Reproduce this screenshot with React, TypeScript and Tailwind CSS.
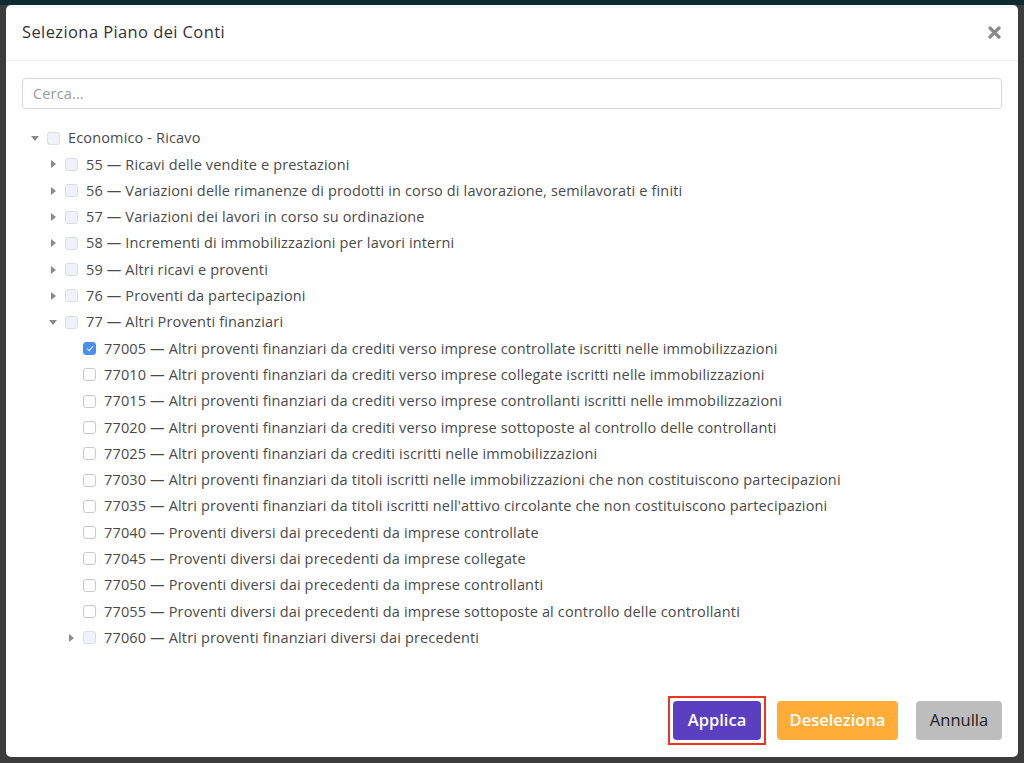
import React from "react";

type Node = {
  code?: string;
  label: string;
  level: number;
  caret?: "right" | "down";
  parent?: boolean;
  checked?: boolean;
};

const rows: Node[] = [
  { label: "Economico - Ricavo", level: 0, caret: "down", parent: true },
  { code: "55", label: "Ricavi delle vendite e prestazioni", level: 1, caret: "right", parent: true },
  { code: "56", label: "Variazioni delle rimanenze di prodotti in corso di lavorazione, semilavorati e finiti", level: 1, caret: "right", parent: true },
  { code: "57", label: "Variazioni dei lavori in corso su ordinazione", level: 1, caret: "right", parent: true },
  { code: "58", label: "Incrementi di immobilizzazioni per lavori interni", level: 1, caret: "right", parent: true },
  { code: "59", label: "Altri ricavi e proventi", level: 1, caret: "right", parent: true },
  { code: "76", label: "Proventi da partecipazioni", level: 1, caret: "right", parent: true },
  { code: "77", label: "Altri Proventi finanziari", level: 1, caret: "down", parent: true },
  { code: "77005", label: "Altri proventi finanziari da crediti verso imprese controllate iscritti nelle immobilizzazioni", level: 2, checked: true },
  { code: "77010", label: "Altri proventi finanziari da crediti verso imprese collegate iscritti nelle immobilizzazioni", level: 2 },
  { code: "77015", label: "Altri proventi finanziari da crediti verso imprese controllanti iscritti nelle immobilizzazioni", level: 2 },
  { code: "77020", label: "Altri proventi finanziari da crediti verso imprese sottoposte al controllo delle controllanti", level: 2 },
  { code: "77025", label: "Altri proventi finanziari da crediti iscritti nelle immobilizzazioni", level: 2 },
  { code: "77030", label: "Altri proventi finanziari da titoli iscritti nelle immobilizzazioni che non costituiscono partecipazioni", level: 2 },
  { code: "77035", label: "Altri proventi finanziari da titoli iscritti nell'attivo circolante che non costituiscono partecipazioni", level: 2 },
  { code: "77040", label: "Proventi diversi dai precedenti da imprese controllate", level: 2 },
  { code: "77045", label: "Proventi diversi dai precedenti da imprese collegate", level: 2 },
  { code: "77050", label: "Proventi diversi dai precedenti da imprese controllanti", level: 2 },
  { code: "77055", label: "Proventi diversi dai precedenti da imprese sottoposte al controllo delle controllanti", level: 2 },
  { code: "77060", label: "Altri proventi finanziari diversi dai precedenti", level: 2, caret: "right", parent: true },
];

function Caret({ dir }: { dir?: "right" | "down" }) {
  return (
    <span className="flex w-[14px] shrink-0 items-center justify-center">
      {dir === "right" && (
        <svg width="5" height="8" viewBox="0 0 5 8">
          <path d="M0 0 L5 4 L0 8 Z" fill="#8a8a8a" />
        </svg>
      )}
      {dir === "down" && (
        <svg width="8" height="5" viewBox="0 0 8 5">
          <path d="M0 0 L8 0 L4 5 Z" fill="#8a8a8a" />
        </svg>
      )}
    </span>
  );
}

function Box({ parent, checked }: { parent?: boolean; checked?: boolean }) {
  if (checked) {
    return (
      <span className="ml-[5px] flex h-[13px] w-[13px] shrink-0 items-center justify-center rounded-[3px] border border-[#4a8ef0] bg-[#4a8ef0]">
        <svg width="8" height="7" viewBox="0 0 8 7">
          <path d="M1 3.6 L3.1 5.6 L7 1.2" fill="none" stroke="#dfe9fb" strokeWidth="1.2" />
        </svg>
      </span>
    );
  }
  return (
    <span
      className={`ml-[5px] h-[13px] w-[13px] shrink-0 rounded-[3px] border ${
        parent ? "border-[#d9dde4] bg-[#f0f2f7]" : "border-[#c9c9c9] bg-white"
      }`}
    />
  );
}

export default function App() {
  return (
    <div
      className="flex h-screen w-full flex-col bg-[#3c3c3c] text-[#4a4a4a]"
      style={{ fontFamily: '"Open Sans", "Liberation Sans", sans-serif' }}
    >
      <div className="flex flex-1 flex-col px-[6px] pb-[6px] pt-[5px] [background:linear-gradient(#0c2a30_0,#0c2a30_5px,#3c3c3c_5px)]">
        <div className="flex flex-1 flex-col rounded-[5px] bg-white">
          {/* header */}
          <div className="flex h-[56px] shrink-0 items-center justify-between border-b border-[#e9ecef] px-4">
            <h2 className="text-[16.5px] tracking-[0.4px] text-[#333]">Seleziona Piano dei Conti</h2>
            <svg width="13" height="13" viewBox="0 0 13 13" className="mr-[1px]">
              <path d="M2 2 L11 11 M11 2 L2 11" stroke="#8a8a8a" strokeWidth="3.2" strokeLinecap="round" />
            </svg>
          </div>

          {/* body */}
          <div className="flex flex-1 flex-col px-4 pt-[17px]">
            <div className="flex h-[31px] items-center rounded-[4px] border border-[#d4d7dc] px-[10px] text-[14.5px] tracking-[0.15px] text-[#9a9a9a]">
              Cerca...
            </div>
            <div className="mt-[16px] flex flex-col pl-[6px] text-[14.5px] tracking-[0.15px]">
              {rows.map((r) => (
                <div
                  key={(r.code ?? "") + r.label}
                  className="flex h-[26.3px] items-center whitespace-nowrap"
                  style={{ paddingLeft: r.level * 18 }}
                >
                  <Caret dir={r.caret} />
                  <Box parent={r.parent} checked={r.checked} />
                  <span className="ml-[8px]">
                    {r.code ? `${r.code} — ${r.label}` : r.label}
                  </span>
                </div>
              ))}
            </div>
          </div>

          {/* footer */}
          <div className="flex shrink-0 items-center justify-end px-4 pb-[12px]">
            <span className="border-2 border-[#f0341f] p-[3px]">
              <button className="block h-[39px] w-[88px] rounded-[4px] bg-[#5a3fc0] text-[16.5px] font-semibold text-white">
                Applica
              </button>
            </span>
            <button className="ml-[11px] h-[39px] w-[121px] rounded-[4px] bg-[#ffad38] text-[16.5px] font-semibold text-white">
              Deseleziona
            </button>
            <button className="ml-[18px] h-[39px] w-[86px] rounded-[4px] bg-[#bdbdbd] text-[16.5px] font-medium text-[#222]">
              Annulla
            </button>
          </div>
        </div>
      </div>
    </div>
  );
}
